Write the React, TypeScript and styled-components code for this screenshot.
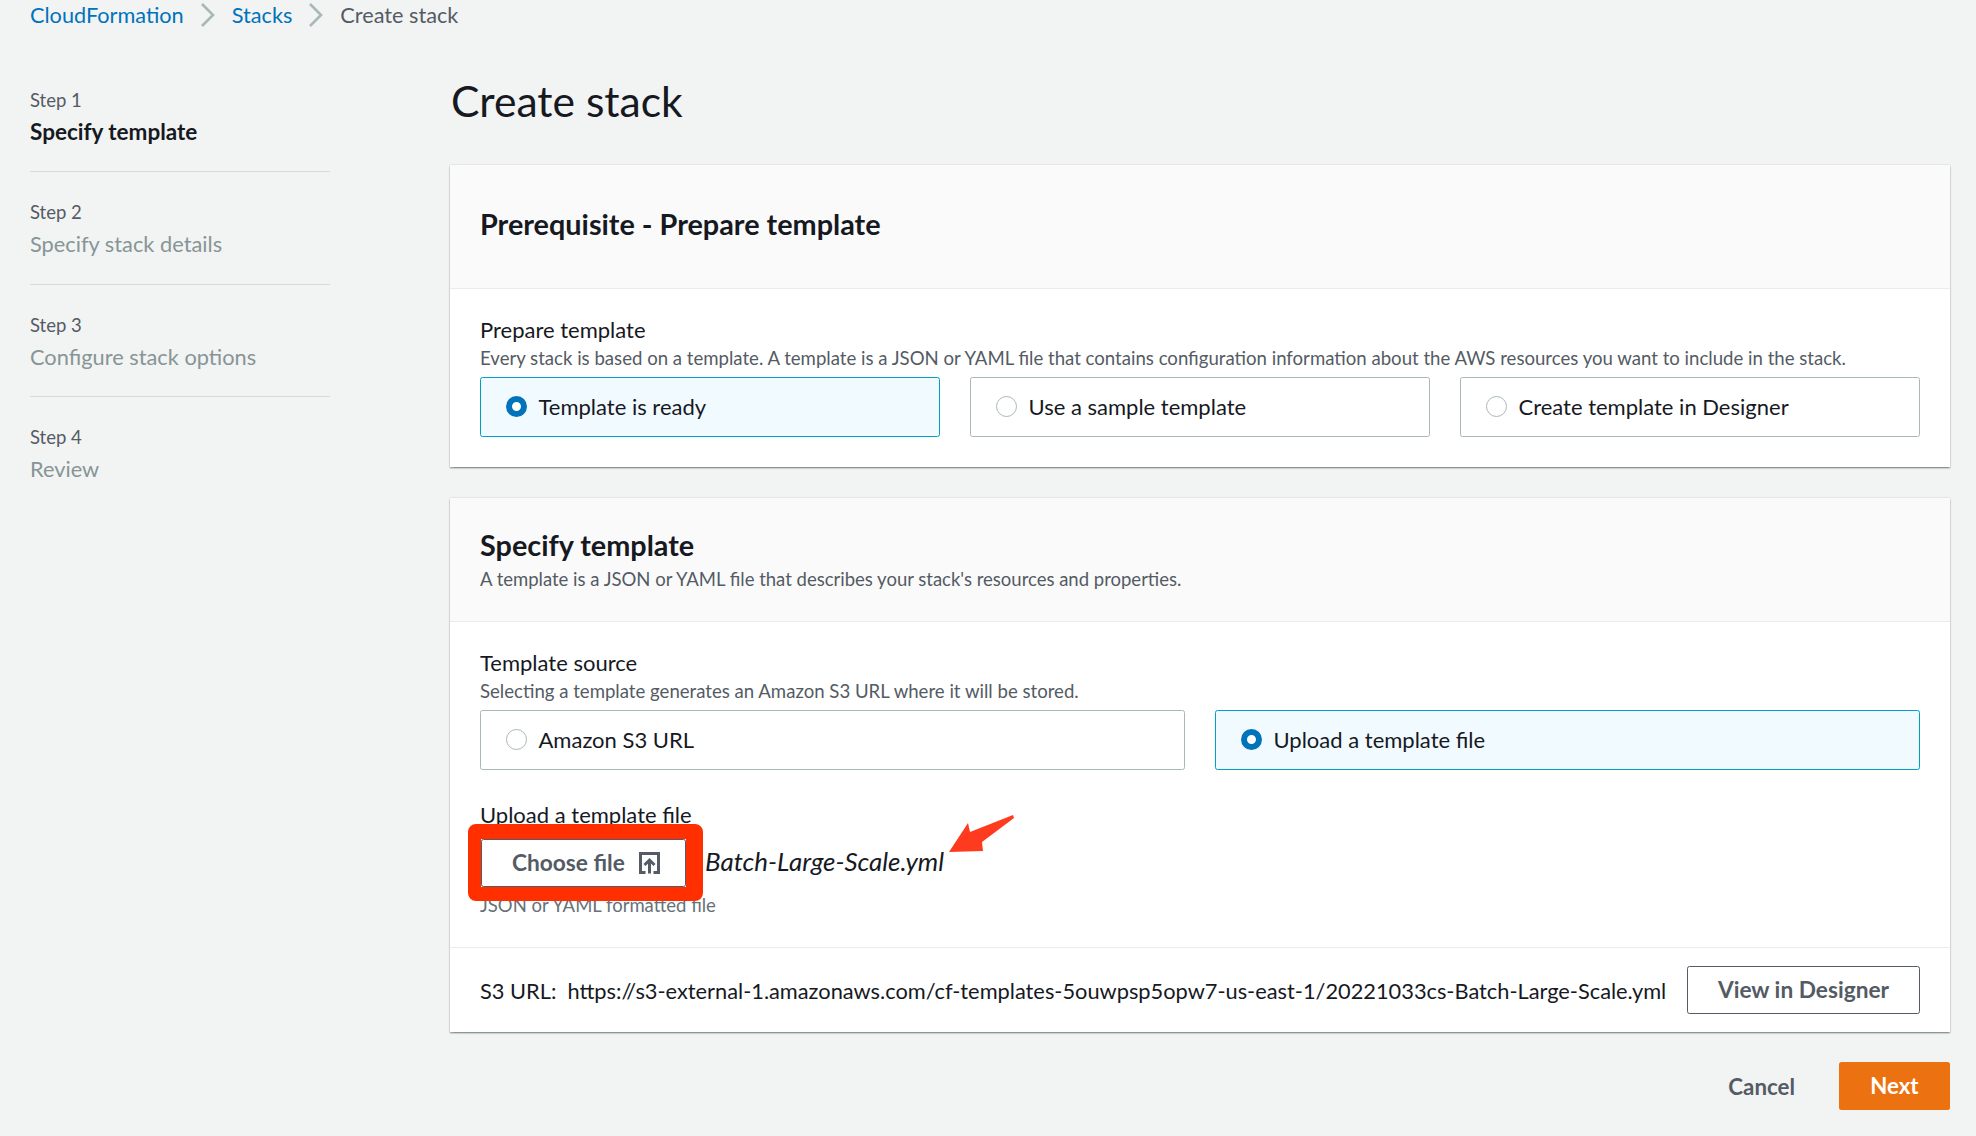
import React from 'react';
import styled, { createGlobalStyle } from 'styled-components';

const Global = createGlobalStyle`
	html, body { margin: 0; padding: 0; background: #f2f3f3; }
	body { font-family: Lato, "Noto Sans", sans-serif; color: #16191f; }
`;

const Page = styled.div`
	width: 1976px;
	height: 1136px;
	overflow: hidden;
	background: #f2f3f3;
`;

const Breadcrumbs = styled.nav`
	display: flex;
	align-items: center;
	height: 32px;
	box-sizing: border-box;
	padding: 0 0 3px 30px;
	font-size: 21.7px;
`;

const Crumb = styled.span<{ $link?: boolean }>`
	color: ${p => (p.$link ? '#0073bb' : '#545b64')};
`;

const Sep = styled.svg`
	width: 16px;
	height: 24px;
	margin: 0 16px;
	fill: none;
	stroke: #aab7b8;
	stroke-width: 2.6;
`;

const Main = styled.div`
	display: flex;
`;

const Sidebar = styled.aside`
	width: 300px;
	margin-left: 30px;
	padding-top: 52px;
	flex-shrink: 0;
`;

const StepItem = styled.div<{ $last?: boolean }>`
	height: 112.5px;
	box-sizing: border-box;
	padding-top: 28px;
	border-bottom: ${p => (p.$last ? 'none' : '1.5px solid #d5dbdb')};
	&:first-child {
		height: 88px;
		padding-top: 4px;
	}
`;

const StepLabel = styled.div`
	font-size: 18.5px;
	line-height: 24px;
	color: #545b64;
`;

const StepName = styled.div<{ $active?: boolean }>`
	margin-top: 4px;
	font-size: ${p => (p.$active ? '22.5px' : '21.8px')};
	line-height: 32px;
	font-weight: ${p => (p.$active ? 700 : 400)};
	color: ${p => (p.$active ? '#16191f' : '#879596')};
`;

const Content = styled.main`
	margin-left: 120px;
	width: 1500px;
`;

const Title = styled.h1`
	margin: 0;
	height: 133px;
	padding: 44px 0 0 1px;
	box-sizing: border-box;
	font-size: 42.6px;
	line-height: 50px;
	font-weight: 400;
	color: #16191f;
`;

const Panel = styled.section`
	background: #fff;
	box-shadow: 0 1.5px 1.5px rgba(0, 28, 36, 0.4), 0 0 1.5px rgba(0, 28, 36, 0.2);
	& + & {
		margin-top: 31px;
	}
`;

const PanelHead = styled.header<{ $withDesc?: boolean }>`
	height: 124px;
	box-sizing: border-box;
	background: #fafafa;
	border-bottom: 1.5px solid #eaeded;
	padding: 0 30px ${p => (p.$withDesc ? '2px' : '5px')};
	display: flex;
	flex-direction: column;
	justify-content: center;
`;

const PanelTitle = styled.h2`
	margin: 0;
	font-size: 28.8px;
	line-height: 36px;
	font-weight: 700;
`;

const PanelDesc = styled.div`
	font-size: 18.5px;
	line-height: 24px;
	color: #545b64;
	margin-top: 4px;
`;

const PanelBody = styled.div`
	padding: 26px 30px 30px;
`;

const FieldLabel = styled.div`
	font-size: 22px;
	line-height: 30px;
`;

const FieldHint = styled.div`
	font-size: 18.6px;
	line-height: 27px;
	margin-bottom: 5px;
	color: #545b64;
	white-space: nowrap;
`;

const Tiles = styled.div<{ $cols: number }>`
	display: grid;
	grid-template-columns: repeat(${p => p.$cols}, 1fr);
	gap: 30px;
`;

const Tile = styled.div<{ $on?: boolean }>`
	height: 60px;
	box-sizing: border-box;
	display: flex;
	align-items: center;
	gap: 12px;
	padding: 0 0 2px 24.5px;
	border-radius: 2.5px;
	font-size: 22px;
	background: ${p => (p.$on ? '#f1faff' : '#fff')};
	border: ${p => (p.$on ? '1.5px solid #00a1c9' : '1.5px solid #aab7b8')};
`;

const Radio = styled.span<{ $on?: boolean }>`
	width: 21px;
	height: 21px;
	box-sizing: border-box;
	border-radius: 50%;
	background: #fff;
	border: ${p => (p.$on ? '6.5px solid #0073bb' : '1.5px solid #aab7b8')};
`;

const UploadLabel = styled(FieldLabel)`
	margin-top: 30px;
`;

const FileRow = styled.div`
	position: relative;
	display: flex;
	align-items: center;
	gap: 19px;
	margin-top: 9px;
`;

const ChooseWrap = styled.div`
	position: relative;
	margin-left: 1px;
`;

const RedFrame = styled.div`
	position: absolute;
	inset: -15px -17px -14px -13px;
	border-style: solid;
	border-color: #ff2f00;
	border-width: 15px 17px 14px 13px;
	border-radius: 8px;
	pointer-events: none;
`;

const Button = styled.button`
	height: 48px;
	box-sizing: border-box;
	padding: 0 30px 2px;
	display: inline-flex;
	align-items: center;
	gap: 14px;
	background: #fff;
	border: 1.5px solid #545b64;
	border-radius: 2.5px;
	color: #545b64;
	font-family: inherit;
	font-size: 22.7px;
	font-weight: 700;
	white-space: nowrap;
`;

const ChooseButton = styled(Button)`
	width: 205px;
	padding: 0 0 2px 30px;
`;

const UploadIcon = styled.svg`
	width: 21px;
	height: 22px;
	margin-top: 2px;
	fill: none;
	stroke: #545b64;
	stroke-width: 3;
`;

const FileName = styled.span`
	padding-bottom: 4px;
	font-size: 25.9px;
	font-style: italic;
`;

const Arrow = styled.svg`
	position: absolute;
	left: 465px;
	top: -27px;
	width: 72px;
	height: 44px;
`;

const FileHint = styled.div`
	margin-top: 6px;
	font-size: 18.5px;
	line-height: 24px;
	color: #687078;
`;

const PanelFoot = styled.footer`
	height: 85px;
	box-sizing: border-box;
	padding: 0 30px;
	display: flex;
	align-items: center;
	justify-content: space-between;
	border-top: 1.5px solid #eaeded;
	font-size: 21.8px;
	white-space: nowrap;
`;

const UrlLabel = styled.span`
	margin-right: 11px;
`;

const Actions = styled.div`
	display: flex;
	justify-content: flex-end;
	align-items: center;
	gap: 44px;
	margin-top: 30px;
`;

const CancelButton = styled.span`
	font-size: 22.3px;
	font-weight: 700;
	color: #545b64;
`;

const NextButton = styled.button`
	width: 111px;
	height: 48px;
	padding: 0 0 2px;
	background: #ec7211;
	border: none;
	border-radius: 2.5px;
	color: #fff;
	font-family: inherit;
	font-size: 22.2px;
	font-weight: 700;
`;

const steps = [
	{ label: 'Step 1', name: 'Specify template', active: true },
	{ label: 'Step 2', name: 'Specify stack details' },
	{ label: 'Step 3', name: 'Configure stack options' },
	{ label: 'Step 4', name: 'Review' },
];

const Chevron = () => (
	<Sep viewBox="0 0 16 24">
		<path d="M2 1l11 11L2 23" />
	</Sep>
);

const TileOption = ({ on, text }: { on?: boolean; text: string }) => (
	<Tile $on={on}>
		<Radio $on={on} />
		{text}
	</Tile>
);

export default function App() {
	return (
		<Page>
			<Global />
			<Breadcrumbs>
				<Crumb $link>CloudFormation</Crumb>
				<Chevron />
				<Crumb $link>Stacks</Crumb>
				<Chevron />
				<Crumb>Create stack</Crumb>
			</Breadcrumbs>
			<Main>
				<Sidebar>
					{steps.map((s, i) => (
						<StepItem key={s.label} $last={i === steps.length - 1}>
							<StepLabel>{s.label}</StepLabel>
							<StepName $active={s.active}>{s.name}</StepName>
						</StepItem>
					))}
				</Sidebar>
				<Content>
					<Title>Create stack</Title>
					<Panel>
						<PanelHead>
							<PanelTitle>Prerequisite - Prepare template</PanelTitle>
						</PanelHead>
						<PanelBody>
							<FieldLabel>Prepare template</FieldLabel>
							<FieldHint>
								Every stack is based on a template. A template is a JSON or YAML file that contains configuration
								information about the AWS resources you want to include in the stack.
							</FieldHint>
							<Tiles $cols={3}>
								<TileOption on text="Template is ready" />
								<TileOption text="Use a sample template" />
								<TileOption text="Create template in Designer" />
							</Tiles>
						</PanelBody>
					</Panel>
					<Panel>
						<PanelHead $withDesc>
							<PanelTitle>Specify template</PanelTitle>
							<PanelDesc>A template is a JSON or YAML file that describes your stack's resources and properties.</PanelDesc>
						</PanelHead>
						<PanelBody>
							<FieldLabel>Template source</FieldLabel>
							<FieldHint>Selecting a template generates an Amazon S3 URL where it will be stored.</FieldHint>
							<Tiles $cols={2}>
								<TileOption text="Amazon S3 URL" />
								<TileOption on text="Upload a template file" />
							</Tiles>
							<UploadLabel>Upload a template file</UploadLabel>
							<FileRow>
								<ChooseWrap>
									<ChooseButton>
										Choose file
										<UploadIcon viewBox="0 0 21 22">
											<path d="M6.500 20.500H1.500V1.500h18v19h-5M10.500 21.500V8M5.500 13l5-5 5 5" />
										</UploadIcon>
									</ChooseButton>
									<RedFrame />
								</ChooseWrap>
								<FileName>Batch-Large-Scale.yml</FileName>
								<Arrow viewBox="0 0 72 44">
									<path d="M4 40L23 11l2 9L68 3l1 3-32 24 1 9z" fill="#ff3b1f" />
								</Arrow>
							</FileRow>
							<FileHint>JSON or YAML formatted file</FileHint>
						</PanelBody>
						<PanelFoot>
							<span>
								<UrlLabel>S3 URL:</UrlLabel>
								https://s3-external-1.amazonaws.com/cf-templates-5ouwpsp5opw7-us-east-1/20221033cs-Batch-Large-Scale.yml
							</span>
							<Button>View in Designer</Button>
						</PanelFoot>
					</Panel>
					<Actions>
						<CancelButton>Cancel</CancelButton>
						<NextButton>Next</NextButton>
					</Actions>
				</Content>
			</Main>
		</Page>
	);
}
